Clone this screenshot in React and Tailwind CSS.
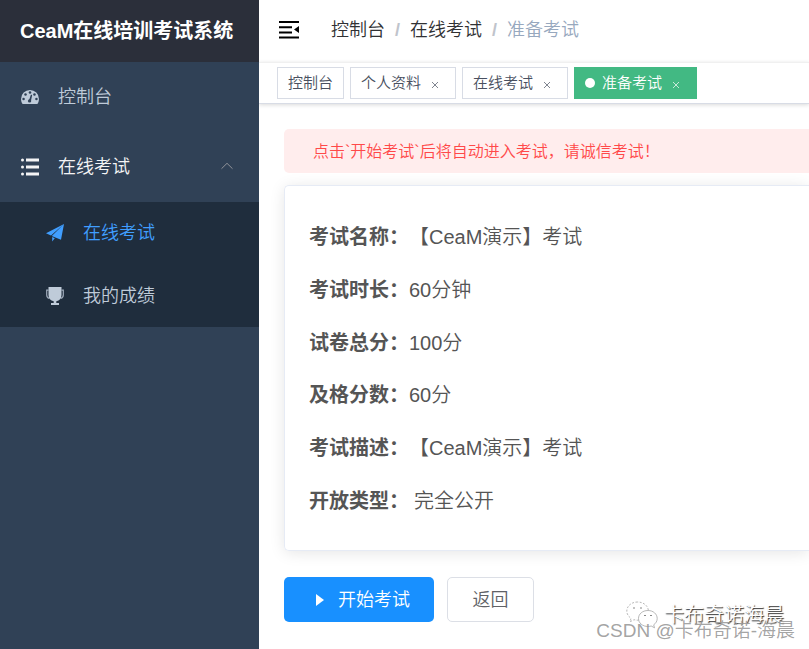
import React, { useState } from "react";

const DashboardIcon = () => (
  <svg viewBox="0 0 128 100" className="w-[18px] h-[14px] shrink-0">
    <path
      fill="currentColor"
      d="M0 64a64 64 0 0 1 128 0c0 12-3 24-10 34-1 1-2 2-4 2H14c-2 0-3-1-4-2C3 88 0 76 0 64z"
    />
    <g fill="#304156">
      <circle cx="18" cy="64" r="9" />
      <circle cx="32" cy="32" r="9" />
      <circle cx="64" cy="18" r="9" />
      <circle cx="96" cy="32" r="9" />
      <circle cx="110" cy="64" r="9" />
      <circle cx="61" cy="78" r="12" />
      <path d="M57 73l12-36c2-6 11-4 10 2l-8 37z" />
    </g>
  </svg>
);

const ListIcon = () => (
  <svg viewBox="0 0 18 18" className="w-[18px] h-[18px] shrink-0" fill="currentColor">
    <circle cx="1.5" cy="2" r="1.5" />
    <circle cx="1.5" cy="9" r="1.5" />
    <circle cx="1.5" cy="16" r="1.5" />
    <path d="M5 .5h13v3H5zM5 7.500h13v3H5zM5 14.500h13v3H5z" />
  </svg>
);

const PlaneIcon = () => (
  <svg viewBox="0 0 18 18" className="w-[18px] h-[18px] shrink-0" fill="currentColor">
    <path d="M18 0L0 9.200l5 2.400zM18 0L5.800 12l3 1.200 6.200 2.500zM6.200 13v4.600l2.600-3.400z" />
  </svg>
);

const TrophyIcon = () => (
  <svg viewBox="0 0 18 18" className="w-[18px] h-[18px] shrink-0">
    <path
      fill="currentColor"
      d="M2.500 0h13v8c0 3.500-2 5.800-5.200 6.300V16H13v2H5v-2h2.700v-1.700C4.500 13.800 2.500 11.500 2.500 8z"
    />
    <path
      fill="none"
      stroke="currentColor"
      strokeWidth="1.2"
      opacity="0.8"
      d="M2.500 3.200H.7V8c0 2 1.200 3 2.600 3.500M15.500 3.200h1.800V8c0 2-1.200 3-2.600 3.500"
    />
  </svg>
);

const FoldIcon = () => (
  <svg viewBox="0 0 20 18" className="w-5 h-[18px]" fill="currentColor">
    <path d="M0 0h20v2H0zM0 5.300h13v2H0zM0 10.600h13v2H0zM0 15.500h20v2H0zM20 5v7l-5-3.500z" />
  </svg>
);

const WechatIcon = () => (
  <svg
    viewBox="0 0 32 28"
    className="w-8 h-7"
    fill="#fff"
    stroke="#999"
    strokeWidth="0.7"
    strokeDasharray="2 1.500"
  >
    <path d="M11.500 1C5.500 1 .8 5 .8 10c0 3 1.600 5.600 4.200 7.200l-1 3.600 4-2.100c1.200.3 2.300.5 3.500.5C17.600 19.200 22.400 15 22.400 10S17.600 1 11.500 1z" />
    <path
      strokeDasharray="none"
      d="M22 9.500c-5.500 0-9.500 3.500-9.500 8s4 8 9.500 8c1 0 2.200-.2 3.200-.5l3.300 1.800-.8-3c2.200-1.500 3.500-3.700 3.500-6.300 0-4.500-4-8-9.200-8z"
    />
    <path stroke="#555" strokeDasharray="none" d="M7 7h2M14 7h2M18 14.500h2M24 14.500h2" />
  </svg>
);

const initialTabs = ["控制台", "个人资料", "在线考试", "准备考试"];

const details = [
  { label: "考试名称：", value: "【CeaM演示】考试" },
  { label: "考试时长：", value: "60分钟" },
  { label: "试卷总分：", value: "100分" },
  { label: "及格分数：", value: "60分" },
  { label: "考试描述：", value: "【CeaM演示】考试" },
  { label: "开放类型：", value: "完全公开", spaced: true },
];

const Sidebar = () => {
  const [open, setOpen] = useState(true);

  return (
    <aside className="w-[259px] shrink-0 bg-[#304156] text-[#bfcbd9] text-lg">
      <h1 className="h-[62px] pl-5 flex items-center bg-[#2b2f3a] text-white text-xl font-bold">
        CeaM在线培训考试系统
      </h1>
      <nav>
        <a href="#dashboard" className="h-[70px] px-[21px] flex items-center gap-[19px]">
          <DashboardIcon />
          控制台
        </a>
        <button
          type="button"
          onClick={() => setOpen(!open)}
          className="h-[70px] w-full pl-[21px] pr-[26px] flex items-center gap-[19px] text-[#f4f4f5]"
        >
          <ListIcon />
          在线考试
          <svg viewBox="0 0 12 10" className="w-3 h-[10px] ml-auto text-[#909399]" fill="none" stroke="currentColor">
            <path d="M0.500 6.700L6 1.300l5.500 5.400" />
          </svg>
        </button>
        {open && (
          <div className="bg-[#1f2d3d] h-[125px] flex flex-col">
            <a href="#exam" className="flex-1 px-[46px] flex items-center gap-[19px] text-[#409eff]">
              <PlaneIcon />
              在线考试
            </a>
            <a href="#score" className="flex-1 px-[46px] flex items-center gap-[19px]">
              <TrophyIcon />
              我的成绩
            </a>
          </div>
        )}
      </nav>
    </aside>
  );
};

const App = () => {
  const [tabs, setTabs] = useState(initialTabs);

  const closeTab = (name) => {
    setTabs(tabs.filter((tab) => tab !== name));
  };

  return (
    <div className="relative min-h-screen flex bg-white font-[350] font-['Liberation_Sans','Noto_Sans_CJK_SC',sans-serif]">
      <Sidebar />

      <div className="flex-1 min-w-0 overflow-hidden">
        <header className="h-[62px] pl-5 pb-[2px] flex items-center whitespace-nowrap">
          <button type="button" aria-label="菜单">
            <FoldIcon />
          </button>
          <nav className="ml-8 flex gap-[10px] text-lg text-[#303133]">
            <a href="#dashboard">控制台</a>
            <span className="font-bold text-[#c0c4cc]">/</span>
            <a href="#exam">在线考试</a>
            <span className="font-bold text-[#c0c4cc]">/</span>
            <span className="text-[#97a8be]">准备考试</span>
          </nav>
        </header>

        {/* Open page tabs */}
        <div className="h-[42px] pl-[18px] flex items-center gap-[6px] whitespace-nowrap border-t border-t-[#f0f0f0] border-b border-b-[#d8dce5] shadow-[0_1px_4px_rgba(0,0,0,0.15)]">
          {tabs.map((tab) => {
            const active = tab === "准备考试";
            return (
              <div
                key={tab}
                className={`h-8 flex items-center border text-[15px] ${
                  tab === "控制台" ? "px-[10px]" : "pl-[10px] pr-4"
                } ${
                  active
                    ? "bg-[#42b983] border-[#42b983] text-white"
                    : "bg-white border-[#d8dce5] text-[#495060]"
                }`}
              >
                {active && <span className="w-[10px] h-[10px] mr-[7px] rounded-full bg-white" />}
                <a href="#tab">{tab}</a>
                {tab !== "控制台" && (
                  <button
                    type="button"
                    aria-label={`关闭${tab}`}
                    onClick={() => closeTab(tab)}
                    className="ml-[10px] pt-[3px]"
                  >
                    <svg viewBox="0 0 8 8" className="w-2 h-2" stroke="currentColor" strokeWidth="0.7">
                      <path d="M1 1l6 6M7 1L1 7" />
                    </svg>
                  </button>
                )}
              </div>
            );
          })}
        </div>

        <main className="pl-[25px] pt-[25px]">
          <div className="h-11 pl-[29px] pt-px flex items-center rounded-l-[5px] bg-[#ffeded] text-[#ff4949] text-base">
            点击`开始考试`后将自动进入考试，请诚信考试！
          </div>

          <dl className="mt-3 min-h-[366px] pt-[37px] pb-[35px] pl-6 flex flex-col justify-between border border-r-0 border-[#e6ebf5] rounded-l-[5px] text-xl leading-7 text-[#555] shadow-[0_2px_15px_rgba(0,0,0,0.1)]">
            {details.map((item) => (
              <div key={item.label} className="flex">
                <dt className="font-bold">{item.label}</dt>
                <dd className={item.spaced ? "pl-[5px]" : ""}>{item.value}</dd>
              </div>
            ))}
          </dl>

          <div className="mt-[26px] flex gap-[13px] text-lg">
            <button
              type="button"
              className="h-[45px] w-[150px] pl-2 flex items-center justify-center gap-[14px] rounded-[5px] bg-[#1890ff] text-white"
            >
              <svg viewBox="0 0 8 12" className="w-2 h-3" fill="currentColor">
                <path d="M0 0l8 6-8 6z" />
              </svg>
              开始考试
            </button>
            <button
              type="button"
              className="h-[45px] w-[87px] rounded-[5px] border border-[#dcdfe6] text-[#606266]"
            >
              返回
            </button>
          </div>
        </main>
      </div>

      {/* Watermarks */}
      <div className="absolute right-[25px] bottom-5 flex items-center gap-[6px] text-xl text-white [text-shadow:1px_1px_1px_#333]">
        <WechatIcon />
        卡布奇诺海晨
      </div>
      <div className="absolute right-[14px] bottom-1 text-[19px] text-[#999]/90">
        CSDN @卡布奇诺-海晨
      </div>
    </div>
  );
};

export default App;
